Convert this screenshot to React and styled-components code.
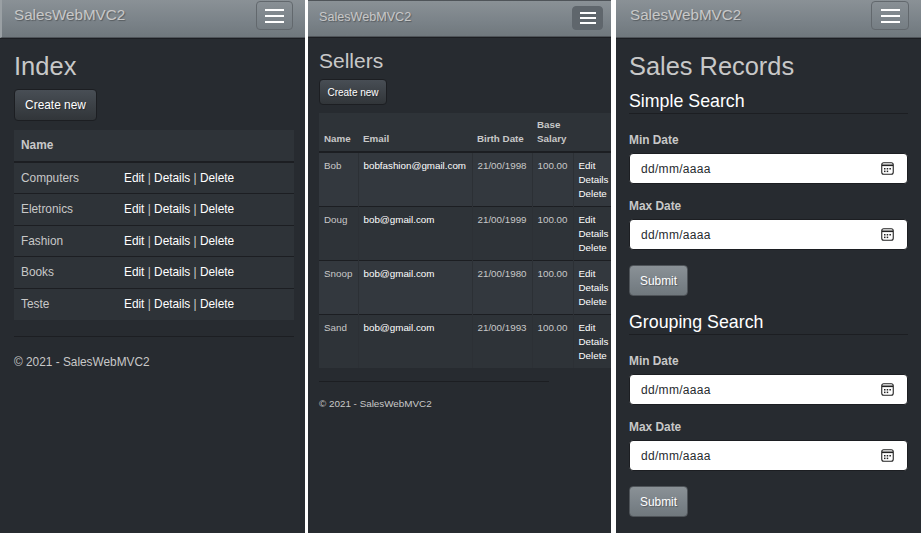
import React from "react";
import styled, { createGlobalStyle } from "styled-components";

const GlobalStyle = createGlobalStyle`
  html, body {
    margin: 0;
    background: #fff;
    font-family: "Liberation Sans", Arial, sans-serif;
  }
`;

const Shots = styled.div`
  display: flex;
  width: 921px;
  height: 533px;
  overflow: hidden;
`;

const Phone = styled.div`
  width: ${(p) => p.$width}px;
  height: 533px;
  margin-left: ${(p) => p.$gap}px;
  flex: none;
  overflow: hidden;
  background: #272b30;
  color: #c8c8c8;
`;

const Navbar = styled.div`
  box-sizing: border-box;
  height: ${(p) => (p.$small ? 37 : 38)}px;
  display: flex;
  align-items: flex-start;
  justify-content: space-between;
  padding: ${(p) => (p.$small ? "5px 8px 0 11px" : "1px 12px 0 14px")};
  padding-left: ${(p) => (p.$edge ? 12 : p.$small ? 11 : 14)}px;
  background: linear-gradient(#8a9196, #7a8288 60%, #70787d);
  border-top: ${(p) => (p.$small ? "1px solid #4f5459" : "none")};
  border-left: ${(p) => (p.$edge ? "2px solid #9aa0a4" : "none")};
  border-bottom: 1px solid #4f5459;
  box-shadow: 0 1px 0 #1c1e22;
`;

const Brand = styled.span`
  font-size: ${(p) => (p.$small ? 12.6 : 15.2)}px;
  line-height: ${(p) => (p.$small ? 23 : 28)}px;
  color: #c8c8c8;
  text-shadow: 1px 1px 1px rgba(0, 0, 0, 0.3);
`;

const Toggle = styled.div`
  box-sizing: border-box;
  width: ${(p) => (p.$small ? 31 : p.$wide ? 38 : 37)}px;
  height: ${(p) => (p.$small ? 24 : 29)}px;
  display: flex;
  flex-direction: column;
  justify-content: center;
  align-items: center;
  gap: ${(p) => (p.$small ? 3 : 4)}px;
  border: 1px solid ${(p) => (p.$small ? "#5f666c" : "#62686d")};
  border-radius: 4px;
  background: ${(p) => (p.$small ? "#5f666c" : "transparent")};
`;

const ToggleBar = styled.span`
  display: block;
  width: ${(p) => (p.$small ? 16 : 19)}px;
  height: 2px;
  background: #fff;
`;

const Content = styled.div`
  padding: ${(p) => p.$padding};
`;

const Title = styled.h1`
  margin: 0;
  font-weight: 400;
  font-size: ${(p) => p.$size}px;
  line-height: ${(p) => p.$line}px;
  color: #c8c8c8;
`;

const CreateButton = styled.div`
  box-sizing: border-box;
  display: flex;
  align-items: center;
  justify-content: center;
  width: ${(p) => (p.$small ? 68 : 83)}px;
  height: ${(p) => (p.$small ? 26 : 32)}px;
  margin-top: ${(p) => (p.$small ? 5 : 7)}px;
  font-size: ${(p) => (p.$small ? 10 : 11.9)}px;
  color: #fff;
  background: linear-gradient(#484e55, #3a3f44 60%, #313539);
  border: 1px solid #1c1e22;
  border-radius: 4px;
  text-shadow: 1px 1px 1px rgba(0, 0, 0, 0.3);
`;

const Table = styled.table`
  border-collapse: collapse;
  table-layout: fixed;
  width: ${(p) => p.$width}px;
  margin-top: ${(p) => (p.$small ? 8 : 9)}px;
  font-size: ${(p) => (p.$small ? 9.8 : 11.85)}px;
`;

const Head = styled.th`
  width: ${(p) => p.$width}px;
  text-align: left;
  vertical-align: bottom;
  font-weight: 700;
  color: #c8c8c8;
  background: #2e3338;
  border-bottom: 2px solid #1c1e22;
  padding: ${(p) => (p.$small ? "5px 5px" : "8px 7px")};
  line-height: ${(p) => (p.$small ? 14 : 15)}px;
  box-sizing: border-box;
  height: ${(p) => (p.$small ? 38 : 32)}px;
`;

const Row = styled.tr`
  background: ${(p) => (p.$stripe ? "#33383e" : "#2e3338")};
`;

const Cell = styled.td`
  box-sizing: border-box;
  height: ${(p) => (p.$small ? 54 : 31.5)}px;
  padding: ${(p) => (p.$small ? "6px 5px 4px" : "0 7px")};
  vertical-align: ${(p) => (p.$small ? "top" : "middle")};
  line-height: 14px;
  white-space: nowrap;
  overflow: hidden;
  border-top: 1px solid #1c1e22;
  border-left: ${(p) => (p.$small && !p.$first ? "1px solid #2c3035" : "none")};
  color: ${(p) => (p.$bright ? "#fff" : "#c8c8c8")};
`;

const Link = styled.a`
  color: #fff;
  display: ${(p) => (p.$block ? "block" : "inline")};
`;

const Rule = styled.hr`
  border: 0;
  height: 1px;
  margin: ${(p) => p.$margin};
  width: ${(p) => p.$width}px;
  background: #1c1e22;
`;

const Footer = styled.p`
  margin: 0;
  font-size: ${(p) => p.$size}px;
  line-height: 16px;
  color: #c8c8c8;
`;

const SectionTitle = styled.h3`
  margin: ${(p) => p.$top}px 0 19px;
  font-weight: 400;
  font-size: 17.8px;
  line-height: 24px;
  color: #fff;
  border-bottom: 1px solid #1c1e22;
`;

const Label = styled.div`
  margin: 15px 0 6px;
  font-size: 11.9px;
  font-weight: 700;
  line-height: 14px;
  color: #c8c8c8;
`;

const DateField = styled.div`
  box-sizing: border-box;
  height: 31px;
  display: flex;
  align-items: center;
  justify-content: space-between;
  padding: 0 13px 0 11px;
  background: #fff;
  border-radius: 4px;
  border: 1px solid #1c1e22;
  font-size: 12px;
  letter-spacing: 0.3px;
  color: #272b30;
`;

const SubmitButton = styled.div`
  box-sizing: border-box;
  display: flex;
  align-items: center;
  justify-content: center;
  width: 59px;
  height: 31px;
  margin-top: 15px;
  font-size: 11.9px;
  color: #fff;
  background: linear-gradient(#8a9196, #7a8288 60%, #70787d);
  border: 1px solid #4f5459;
  border-radius: 4px;
  text-shadow: 1px 1px 1px rgba(0, 0, 0, 0.3);
`;

const CalendarIcon = () => (
  <svg width="13" height="13" viewBox="0 0 13 13" fill="none">
    <rect x="0.75" y="0.75" width="11.5" height="11.5" rx="2" stroke="#222" strokeWidth="1.1" />
    <rect x="1" y="2.5" width="11" height="1.6" fill="#222" />
    <rect x="3" y="6" width="1.5" height="1.5" fill="#222" />
    <rect x="5.7" y="6" width="1.5" height="1.5" fill="#222" />
    <rect x="8.4" y="6" width="1.5" height="1.5" fill="#222" />
    <rect x="3" y="8.6" width="1.5" height="1.5" fill="#222" />
    <rect x="5.7" y="8.6" width="1.5" height="1.5" fill="#222" />
  </svg>
);

const Nav = ({ small, edge, wide }) => (
  <Navbar $small={small} $edge={edge}>
    <Brand $small={small}>SalesWebMVC2</Brand>
    <Toggle $small={small} $wide={wide}>
      <ToggleBar $small={small} />
      <ToggleBar $small={small} />
      <ToggleBar $small={small} />
    </Toggle>
  </Navbar>
);

const departments = ["Computers", "Eletronics", "Fashion", "Books", "Teste"];

const sellers = [
  { name: "Bob", email: "bobfashion@gmail.com", birth: "21/00/1998" },
  { name: "Doug", email: "bob@gmail.com", birth: "21/00/1999" },
  { name: "Snoop", email: "bob@gmail.com", birth: "21/00/1980" },
  { name: "Sand", email: "bob@gmail.com", birth: "21/00/1993" },
];

const DateGroup = ({ label }) => (
  <>
    <Label>{label}</Label>
    <DateField>
      dd/mm/aaaa
      <CalendarIcon />
    </DateField>
  </>
);

const SearchForm = ({ title, top }) => (
  <>
    <SectionTitle $top={top}>{title}</SectionTitle>
    <DateGroup label="Min Date" />
    <DateGroup label="Max Date" />
    <SubmitButton>Submit</SubmitButton>
  </>
);

export default function App() {
  return (
    <Shots>
      <GlobalStyle />
      <Phone $width={305} $gap={0}>
        <Nav edge />
        <Content $padding="12px 11px 0 14px">
          <Title $size={25.5} $line={32}>Index</Title>
          <CreateButton>Create new</CreateButton>
          <Table $width={280}>
            <thead>
              <tr>
                <Head $width={103}>Name</Head>
                <Head />
              </tr>
            </thead>
            <tbody>
              {departments.map((name) => (
                <Row key={name}>
                  <Cell>{name}</Cell>
                  <Cell>
                    <Link>Edit</Link> | <Link>Details</Link> | <Link>Delete</Link>
                  </Cell>
                </Row>
              ))}
            </tbody>
          </Table>
          <Rule $margin="16px 0 17px" />
          <Footer $size={11.85}>© 2021 - SalesWebMVC2</Footer>
        </Content>
      </Phone>

      <Phone $width={303} $gap={3}>
        <Nav small />
        <Content $padding="11px 0 0 11px">
          <Title $size={21} $line={26}>Sellers</Title>
          <CreateButton $small>Create new</CreateButton>
          <Table $small $width={300}>
            <thead>
              <tr>
                <Head $small $width={39}>Name</Head>
                <Head $small $width={114}>Email</Head>
                <Head $small $width={60}>Birth Date</Head>
                <Head $small $width={41}>Base Salary</Head>
                <Head $small $width={46} />
              </tr>
            </thead>
            <tbody>
              {sellers.map((s, i) => (
                <Row key={s.name} $stripe={i % 2 === 0}>
                  <Cell $small $first>{s.name}</Cell>
                  <Cell $small $bright>{s.email}</Cell>
                  <Cell $small>{s.birth}</Cell>
                  <Cell $small>100.00</Cell>
                  <Cell $small>
                    <Link $block>Edit</Link>
                    <Link $block>Details</Link>
                    <Link $block>Delete</Link>
                  </Cell>
                </Row>
              ))}
            </tbody>
          </Table>
          <Rule $margin="13px 0 14px" $width={230} />
          <Footer $size={9.85}>© 2021 - SalesWebMVC2</Footer>
        </Content>
      </Phone>

      <Phone $width={305} $gap={5}>
        <Nav wide />
        <Content $padding="12px 13px 0 13px">
          <Title $size={25.4} $line={32}>Sales Records</Title>
          <SearchForm title="Simple Search" top={7} />
          <SearchForm title="Grouping Search" top={14} />
        </Content>
      </Phone>
    </Shots>
  );
}
